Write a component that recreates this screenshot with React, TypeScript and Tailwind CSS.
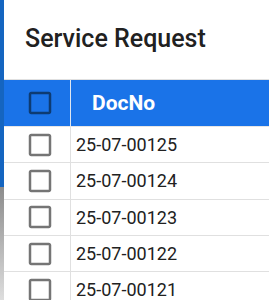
import React from "react";

function Box({ color, size = 30 }: { color: string; size?: number }) {
  return (
    <svg width={size} height={size} viewBox="0 0 24 24" fill={color}>
      <path d="M19 5v14H5V5h14m0-2H5c-1.11 0-2 .9-2 2v14c0 1.1.89 2 2 2h14c1.1 0 2-.9 2-2V5c0-1.1-.9-2-2-2z" />
    </svg>
  );
}

const rows = ["25-07-00125", "25-07-00124", "25-07-00123", "25-07-00122", "25-07-00121"];

export default function App() {
  return (
    <div
      className="flex w-[269px] h-[300px] overflow-hidden bg-white"
      style={{ fontFamily: "Roboto, 'Liberation Sans', sans-serif" }}
    >
      <div className="flex flex-col w-[4px] shrink-0">
        <div className="h-[187px] bg-[#1565c0]" />
        <div className="flex-1 bg-gradient-to-b from-[#8c8c8c] to-[#dedede]" />
      </div>
      <div className="flex-1 flex flex-col bg-white rounded-tl-[4px] overflow-hidden">
        <div className="h-[79px] shrink-0 pt-[23px] pl-[21px]">
          <div className="text-[25px] leading-[32px] font-medium text-[#212121] whitespace-nowrap">
            Service Request
          </div>
        </div>
        <div className="border-t border-[#e0e0e0]">
          <div className="flex h-[47px] bg-[#1a73e8] border-b border-[#e6e6e6]">
            <div className="w-[67px] shrink-0 flex items-center pl-[21px] border-r border-[#dfe6f0]">
              <Box color="#0d3b72" />
            </div>
            <div className="flex-1 flex items-center pl-[21px] text-[21px] leading-[24px] font-bold text-white whitespace-nowrap">
              DocNo
            </div>
          </div>
          {rows.map((r) => (
            <div key={r} className="flex h-[36.33px] border-b border-[#e0e0e0]">
              <div className="w-[67px] shrink-0 flex items-center pl-[21px] border-r border-[#e0e0e0]">
                <Box color="#757575" />
              </div>
              <div className="flex-1 flex items-center pl-[5px] text-[18px] text-[#212121] whitespace-nowrap">
                {r}
              </div>
            </div>
          ))}
        </div>
      </div>
    </div>
  );
}
